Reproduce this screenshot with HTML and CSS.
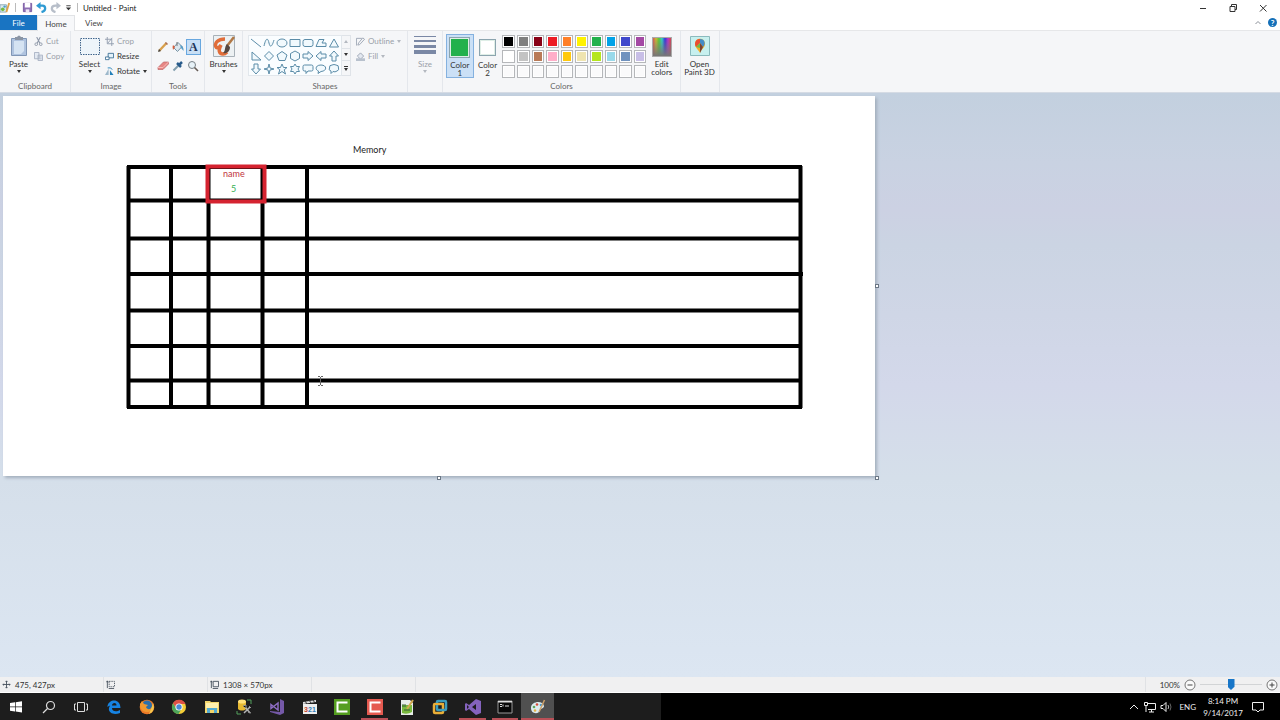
FILE: index.html
```
<!DOCTYPE html>
<html lang="en">
<head>
    <meta charset="UTF-8">
    <meta name="viewport" content="width=device-width, initial-scale=1.0">
    <title>Untitled - Paint</title>
    <link rel="stylesheet" href="styles.css">
</head>
<body>
    <header class="titlebar">
        <svg class="app-icon" viewBox="0 0 12 12"><path d="M0 3h7v8H0z" fill="#dcebf0" stroke="#8ca9b5"/><circle cx="3" cy="8" r="2" fill="#75b943"/><circle cx="5" cy="5" r="1.3" fill="#4ba0ca"/><path d="M10 1L7 11" stroke="#dfa34c" stroke-width="2"/></svg>
        <span class="title-sep"></span>
        <button class="quick" aria-label="Save"><svg viewBox="0 0 12 12"><path d="M1.5 1.5h9v9h-9z" fill="#8e6fb5" stroke="#75569f"/><path d="M3 1h6v5H3z" fill="#fff"/><path d="M4 8h4v3H4z" fill="#ede5f5"/></svg></button>
        <button class="quick" aria-label="Undo"><svg viewBox="0 0 12 12"><path d="M3 4h4q3 0 3 3t-4 4" fill="none" stroke="#2f9bd3" stroke-width="2.500"/><path d="M0 4l5-4v8z" fill="#2f9bd3"/></svg></button>
        <button class="quick" aria-label="Redo"><svg viewBox="0 0 12 12"><path d="M9 4H6Q2 4 2 7t4 4" fill="none" stroke="#b7bec9" stroke-width="2.500"/><path d="M12 4L7 0v8z" fill="#b7bec9"/></svg></button>
        <button class="quick more" aria-label="Customize toolbar"><svg viewBox="0 0 8 8"><path d="M1.5 2h5" stroke="#333"/><path d="M1 4h6L4 7z" fill="#333"/></svg></button>
        <span class="title-sep"></span>
        <h1>Untitled - Paint</h1>
        <div class="window-buttons">
            <button aria-label="Minimize"><svg viewBox="0 0 10 10"><path d="M2 5.500h6" stroke="#333"/></svg></button>
            <button aria-label="Restore"><svg viewBox="0 0 10 10"><path d="M2 3.500h5v5H2zM3.500 3.500v-2h5v5h-1.500" fill="none" stroke="#333"/></svg></button>
            <button aria-label="Close"><svg viewBox="0 0 10 10"><path d="M2 2l6.500 6.500M8.500 2L2 8.500" stroke="#333"/></svg></button>
        </div>
    </header>

    <nav class="tabs">
        <button class="tab file">File</button>
        <button class="tab active">Home</button>
        <button class="tab">View</button>
        <div class="tab-tools">
            <button aria-label="Minimize the Ribbon"><svg viewBox="0 0 10 10"><path d="M2.500 6L5 3.500 7.500 6" fill="none" stroke="#8b9098"/></svg></button>
            <button class="help" aria-label="Help">?</button>
        </div>
    </nav>

    <section class="ribbon">
        <div class="group clipboard">
            <div class="controls">
                <button class="big">
                    <svg viewBox="0 0 18 22"><path d="M1.500 3.500h15v17h-15z" fill="#afc3df" stroke="#8096b5"/><path d="M4 6h10v10l-3 3H4z" fill="#d5e3f2"/><path d="M5 2h2q2-3 4 0h2v3H5z" fill="#8b95a4"/></svg>
                    <span>Paste</span><i class="arrow"></i>
                </button>
                <div class="stack">
                    <button class="row off"><svg viewBox="0 0 10 10"><path d="M3 0l3.500 7M7 0L3.500 7" stroke="#8e98a9" stroke-width="1.200"/><circle cx="2.500" cy="8" r="1.500" fill="none" stroke="#8e98a9"/><circle cx="7.500" cy="8" r="1.500" fill="none" stroke="#8e98a9"/></svg>Cut</button>
                    <button class="row off"><svg viewBox="0 0 10 10"><path d="M.5.5h5v7h-5zM4.500 3.500h5v6h-5z" fill="#e3e9f2" stroke="#a6b0c2"/><path d="M5.500 5.500h3M5.500 7.500h3" stroke="#a6b0c2" stroke-width=".7"/></svg>Copy</button>
                </div>
            </div>
            <h2>Clipboard</h2>
        </div>

        <div class="group image">
            <div class="controls">
                <button class="big">
                    <svg viewBox="0 0 22 22"><path d="M1.500 3.500h19v16h-19z" fill="#edf4fa" stroke="#40658c" stroke-dasharray="1.500 1"/></svg>
                    <span>Select</span><i class="arrow"></i>
                </button>
                <div class="stack">
                    <button class="row off"><svg viewBox="0 0 10 10"><path d="M2.500 0v7.500H10M0 2.500h7.500V10M3 7l5-6" fill="none" stroke="#909bad"/></svg>Crop</button>
                    <button class="row"><svg viewBox="0 0 10 10"><path d="M3.500 1.500h6v5h-6z" fill="#e4f2fa" stroke="#3e7195"/><path d="M.5 5.500h4v3h-4z" fill="#fff" stroke="#3e7195"/></svg>Resize</button>
                    <button class="row"><svg viewBox="0 0 10 10"><path d="M4 2v7H0z" fill="#9cb8cb"/><path d="M5.500 3.500L9.500 9h-4z" fill="#2380b9"/><path d="M3 1q4-1 5 2" fill="none" stroke="#2380b9"/></svg>Rotate<i class="arrow"></i></button>
                </div>
            </div>
            <h2>Image</h2>
        </div>

        <div class="group tools">
            <div class="controls tool-grid">
                <button aria-label="Pencil"><svg viewBox="0 0 12 12"><path d="M2 10L9.500 2" stroke="#d8a04c" stroke-width="2.400"/><path d="M1 11l1-3 2 2z" fill="#444"/><path d="M8.500 1.500l2 2" stroke="#a96f55" stroke-width="1.500"/></svg></button>
                <button aria-label="Fill with color"><svg viewBox="0 0 12 12"><path d="M6 1.500l4 4-4.500 5-4-4z" fill="#dce7ee" stroke="#7793a6"/><path d="M5 1v4" stroke="#777"/><path d="M1 4Q0 6 1 9l2-3z" fill="#d65d39"/><path d="M8 4q4 1 3.500 6L9 7z" fill="#579ec8"/></svg></button>
                <button class="text-tool" aria-pressed="true" aria-label="Text">A</button>
                <button aria-label="Eraser"><svg viewBox="0 0 12 12"><path d="M1 7.500L6.500 2h5v2L6 9.500H1z" fill="#e78684" stroke="#bd686b" stroke-width=".7"/><path d="M1 7.500h5L11.500 2" fill="none" stroke="#f6bbb8"/></svg></button>
                <button aria-label="Color picker"><svg viewBox="0 0 12 12"><path d="M1.500 10.500L7 5" stroke="#819dad" stroke-width="2"/><path d="M5 3l4 4M7 5l3-3" stroke="#285b8b" stroke-width="2.500"/></svg></button>
                <button aria-label="Magnifier"><svg viewBox="0 0 12 12"><circle cx="5" cy="5" r="3.500" fill="#e7f2f8" stroke="#788087"/><path d="M7.500 7.500L11 11" stroke="#665c56" stroke-width="1.600"/></svg></button>
            </div>
            <h2>Tools</h2>
        </div>

        <div class="group brushes">
            <div class="controls">
                <button class="big">
                    <svg viewBox="0 0 22 22"><path d="M.5.5h21v21H.5z" fill="#edf1f3" stroke="#a8b1b8"/><path d="M12 4C5 4 1 8 3 12c1 2 4 0 5-2-3 5-2 9 2 9 2 0 3-1 4-2" fill="none" stroke="#e16d39" stroke-width="3.500"/><path d="M21 2l-7 9" stroke="#b17846" stroke-width="2.500"/><path d="M14 9l3 3c0 5-4 7-7 6 3-2 1-6 4-9z" fill="#554740"/></svg>
                    <span>Brushes</span><i class="arrow"></i>
                </button>
            </div>
        </div>

        <div class="group shapes">
            <div class="controls">
                <div class="gallery">
                    <button aria-label="Line"><svg viewBox="0 0 12 12"><path d="M1 2l10 8"/></svg></button>
                    <button aria-label="Curve"><svg viewBox="0 0 12 12"><path d="M1 9C3 0 5 1 6 6s3 4 5-3"/></svg></button>
                    <button aria-label="Oval"><svg viewBox="0 0 12 12"><ellipse cx="6" cy="6" rx="5" ry="4"/></svg></button>
                    <button aria-label="Rectangle"><svg viewBox="0 0 12 12"><path d="M1 2.500h10v7H1z"/></svg></button>
                    <button aria-label="Rounded rectangle"><svg viewBox="0 0 12 12"><rect x="1" y="2.500" width="10" height="7" rx="2"/></svg></button>
                    <button aria-label="Polygon"><svg viewBox="0 0 12 12"><path d="M1 9.500l3-7h5L7 6h4v3.500z"/></svg></button>
                    <button aria-label="Triangle"><svg viewBox="0 0 12 12"><path d="M6 2l4.500 8h-9z"/></svg></button>
                    <button aria-label="Right triangle"><svg viewBox="0 0 12 12"><path d="M2 2v8h9z"/></svg></button>
                    <button aria-label="Diamond"><svg viewBox="0 0 12 12"><path d="M6 1.500L10.500 6 6 10.500 1.500 6z"/></svg></button>
                    <button aria-label="Pentagon"><svg viewBox="0 0 12 12"><path d="M6 1.500l5 3.500-2 5.500H3L1 5z"/></svg></button>
                    <button aria-label="Hexagon"><svg viewBox="0 0 12 12"><path d="M6 1l4.500 2.500v5L6 11 1.500 8.500v-5z"/></svg></button>
                    <button aria-label="Right arrow"><svg viewBox="0 0 12 12"><path d="M1 4h5V1.500L11 6l-5 4.500V8H1z"/></svg></button>
                    <button aria-label="Left arrow"><svg viewBox="0 0 12 12"><path d="M11 4H6V1.500L1 6l5 4.500V8h5z"/></svg></button>
                    <button aria-label="Up arrow"><svg viewBox="0 0 12 12"><path d="M4 11V6H1.500L6 1l4.500 5H8v5z"/></svg></button>
                    <button aria-label="Down arrow"><svg viewBox="0 0 12 12"><path d="M4 1v5H1.500L6 11l4.500-5H8V1z"/></svg></button>
                    <button aria-label="Four-point star"><svg viewBox="0 0 12 12"><path d="M6 1l1 4 4 1-4 1-1 4-1-4-4-1 4-1z"/></svg></button>
                    <button aria-label="Five-point star"><svg viewBox="0 0 12 12"><path d="M6 1l1.500 3.500H11L8.200 6.800 9.500 11 6 8.500 2.500 11l1.300-4.200L1 4.500h3.500z"/></svg></button>
                    <button aria-label="Six-point star"><svg viewBox="0 0 12 12"><path d="M6 1l1.500 2.500h3L9 6l1.500 2.500h-3L6 11 4.500 8.500h-3L3 6 1.500 3.500h3z"/></svg></button>
                    <button aria-label="Rounded callout"><svg viewBox="0 0 12 12"><path d="M2.500 2h7Q11 2 11 3.500v3Q11 8 9.500 8H6l-2 2.500V8H2.500Q1 8 1 6.500v-3Q1 2 2.500 2z"/></svg></button>
                    <button aria-label="Oval callout"><svg viewBox="0 0 12 12"><path d="M3.500 8C0 7 0 2 6 2s6.500 6 0 6.500L3 10.500z"/></svg></button>
                    <button aria-label="Cloud callout"><svg viewBox="0 0 12 12"><path d="M3 8Q0 7 1.500 5 1 2 4 2q2-1 4 0 3 0 2.500 3 1 2-1.500 3-2 1.500-4 .500l-2 2z"/></svg></button>
                </div>
                <div class="gallery-scroll">
                    <button class="off" aria-label="Scroll up"><i class="arrow up"></i></button>
                    <button aria-label="Scroll down"><i class="arrow"></i></button>
                    <button class="all" aria-label="All shapes"><i class="arrow"></i></button>
                </div>
                <div class="stack">
                    <button class="row off"><svg viewBox="0 0 10 10"><path d="M.5 9.500v-8h6M2 9l2-.5 5.500-6-2-1.500L3 6.500z" fill="none" stroke="#9ba4b2"/></svg>Outline<i class="arrow"></i></button>
                    <button class="row off"><svg viewBox="0 0 10 10"><path d="M5 1l3.500 3.500L5 8 1.500 4.500z" fill="#e3e8f0" stroke="#9ba4b2"/><path d="M0 7h10v3H0z" fill="#b8c1cd"/></svg>Fill<i class="arrow"></i></button>
                </div>
            </div>
            <h2>Shapes</h2>
        </div>

        <div class="group size">
            <div class="controls">
                <button class="big off">
                    <svg viewBox="0 0 22 22"><path d="M0 1h22v1H0zM0 5h22v2H0zM0 10h22v3H0zM0 15h22v4H0z" fill="#7a88a5"/></svg>
                    <span>Size</span><i class="arrow"></i>
                </button>
            </div>
        </div>

        <div class="group colors">
            <div class="controls">
                <button class="big pick selected"><span class="current green"></span><span>Color<br>1</span></button>
                <button class="big pick"><span class="current second white"></span><span>Color<br>2</span></button>
                <div class="palette">
                    <button class="black" aria-label="Black"></button>
                    <button class="gray" aria-label="Gray"></button>
                    <button class="dark-red" aria-label="Dark red"></button>
                    <button class="red" aria-label="Red"></button>
                    <button class="orange" aria-label="Orange"></button>
                    <button class="yellow" aria-label="Yellow"></button>
                    <button class="green" aria-label="Green"></button>
                    <button class="turquoise" aria-label="Turquoise"></button>
                    <button class="indigo" aria-label="Indigo"></button>
                    <button class="purple" aria-label="Purple"></button>
                    <button class="white" aria-label="White"></button>
                    <button class="light-gray" aria-label="Light gray"></button>
                    <button class="brown" aria-label="Brown"></button>
                    <button class="rose" aria-label="Rose"></button>
                    <button class="gold" aria-label="Gold"></button>
                    <button class="light-yellow" aria-label="Light yellow"></button>
                    <button class="lime" aria-label="Lime"></button>
                    <button class="light-turquoise" aria-label="Light turquoise"></button>
                    <button class="blue-gray" aria-label="Blue gray"></button>
                    <button class="lavender" aria-label="Lavender"></button>
                    <button class="custom" aria-label="Custom 1"></button>
                    <button class="custom" aria-label="Custom 2"></button>
                    <button class="custom" aria-label="Custom 3"></button>
                    <button class="custom" aria-label="Custom 4"></button>
                    <button class="custom" aria-label="Custom 5"></button>
                    <button class="custom" aria-label="Custom 6"></button>
                    <button class="custom" aria-label="Custom 7"></button>
                    <button class="custom" aria-label="Custom 8"></button>
                    <button class="custom" aria-label="Custom 9"></button>
                    <button class="custom" aria-label="Custom 10"></button>
                </div>
                <button class="big"><span class="spectrum"></span><span>Edit<br>colors</span></button>
            </div>
            <h2>Colors</h2>
        </div>

        <div class="group paint3d">
            <div class="controls">
                <button class="big">
                    <svg viewBox="0 0 22 22"><path d="M1.500 1.500h19v19h-19z" fill="#c7f0ef" stroke="#8bbabd"/><path d="M11 18c-1-3-5-5-5-9 0-7 10-7 10 0 0 4-4 5-5 9z" fill="#f6ad22"/><path d="M11 4c-5 0-6 5-4 8l4-4z" fill="#e94e35"/><path d="M11 4c5 0 6 5 3 8l-3-4z" fill="#438cca"/><path d="M11 8l3 4-3 6z" fill="#7a4435"/><path d="M7 12l4-4v5z" fill="#6fba48"/></svg>
                    <span>Open<br>Paint 3D</span>
                </button>
            </div>
        </div>
    </section>

    <main class="workspace">
        <div class="sheet">
            <svg class="drawing" viewBox="-1 0 872 380">
                <!-- memory grid -->
                <path class="ink" d="M123 71h675M123 104.500h675M123 142.500h675M123 178h676M123 214.500h675M123 250h675M123 284.500h675M123 311h675"/>
                <path class="ink" d="M124.500 70v242M167 70v242M204.500 70v242M258.500 70v242M303 69v243M796.500 70v242"/>
                <path class="marker" d="M203.500 70.500h57v35h-57z"/>
                <text class="caption" x="349" y="57">Memory</text>
                <text class="caption marker-text" x="219" y="81">name</text>
                <text class="caption value-text" x="227" y="96">5</text>
                <path class="ibeam" d="M314 280.500h2M317 280.500h2M314 289.500h2M317 289.500h2M316.500 281v8"/>
            </svg>
            <span class="handle right"></span>
            <span class="handle bottom"></span>
            <span class="handle corner"></span>
        </div>
    </main>

    <footer class="statusbar">
        <div class="status"><svg viewBox="0 0 10 10"><path d="M5 1v8M1 5h8M4 2l1-1 1 1M4 8l1 1 1-1M2 4L1 5l1 1M8 4l1 1-1 1" fill="none" stroke="#46505c"/></svg>475, 427px</div>
        <div class="status"><svg viewBox="0 0 10 10"><path d="M1.500 1v8M.5 2.500L1.500 1l1 1.500M3 9.500h6" fill="none" stroke="#46505c"/><path d="M3.500 1.500h6v6h-6z" fill="none" stroke="#46505c" stroke-dasharray="1.500 1"/></svg></div>
        <div class="status"><svg viewBox="0 0 10 10"><path d="M1.500 1v8M.5 2.500L1.500 1l1 1.500M3 9.500h6M3.500 1.500h6v6h-6z" fill="none" stroke="#46505c"/></svg>1308 × 570px</div>
        <div class="status"></div>
        <div class="zoom">
            <label for="zoom">100%</label>
            <button aria-label="Zoom out"><svg viewBox="0 0 12 12"><circle cx="6" cy="6" r="5" fill="#fafafa" stroke="#777"/><path d="M3.500 6h5" stroke="#444"/></svg></button>
            <input type="range" id="zoom" min="0" max="100" value="50">
            <button aria-label="Zoom in"><svg viewBox="0 0 12 12"><circle cx="6" cy="6" r="5" fill="#fafafa" stroke="#777"/><path d="M3.500 6h5M6 3.500v5" stroke="#444"/></svg></button>
        </div>
    </footer>

    <div class="taskbar">
        <div class="apps">
            <button aria-label="Start"><svg viewBox="0 0 16 16"><path d="M2 4l5-.7v4.200H2zM7.700 3.200L14 2.300v5.200H7.700zM2 8.300h5v4.200l-5-.7zM7.700 8.300H14v5.200l-6.300-.9z" fill="#fff"/></svg></button>
            <button aria-label="Search"><svg viewBox="0 0 16 16"><circle cx="9.500" cy="6.500" r="4" fill="none" stroke="#ddd" stroke-width="1.200"/><path d="M6.500 9.500L2 14" stroke="#ddd" stroke-width="1.300"/></svg></button>
            <button aria-label="Task view"><svg viewBox="0 0 16 16"><path d="M4.500 3.500h7v9h-7zM3 5H1.500v6H3M13 5h1.500v6H13" fill="none" stroke="#ddd"/></svg></button>
            <button aria-label="Edge"><svg viewBox="0 0 16 16"><path d="M1.500 7C3 0 14-1 14.500 9H6c0 4 5 4 8 2v3C7 17 0 13 4 6.500 2.500 7 2 7.500 1.500 8zM6 6.500h4.500C10.500 3 6 3.500 6 6.500z" fill="#1683e2" fill-rule="evenodd"/></svg></button>
            <button aria-label="Firefox"><svg viewBox="0 0 16 16"><circle cx="8" cy="8" r="7.300" fill="#ed7927"/><circle cx="8" cy="6.500" r="5" fill="#2c70ac"/><path d="M1 5l2-3 2 3 4 1-2 2c1 3 5 3 7-1 0 6-7 8-11 4C1 9 1 7 1 5z" fill="#f29930"/><path d="M14 4q3 8-4 11 2-4 4-11z" fill="#f5c74e"/></svg></button>
            <button aria-label="Chrome"><svg viewBox="0 0 16 16"><circle cx="8" cy="8" r="7" fill="#f4cd37"/><path d="M2 4.200A7 7 0 0 1 14.500 5H8a3.200 3.200 0 0 0-3 4.200z" fill="#dd5147"/><path d="M2 4.200A7 7 0 0 0 7.500 15L10.600 9.800A3.500 3.500 0 0 1 5 9.200z" fill="#4da65a"/><circle cx="8" cy="8" r="3.600" fill="#fff"/><circle cx="8" cy="8" r="2.700" fill="#4989d7"/></svg></button>
            <button aria-label="File Explorer"><svg viewBox="0 0 16 16"><path d="M1 2h5l1 1h8v11H1z" fill="#f2d56c"/><path d="M2 4h12v5H2z" fill="#fff0ae"/><path d="M3 9h10v5h-3v-3H6v3H3z" fill="#54abd2"/></svg></button>
            <button aria-label="SQL Server"><svg viewBox="0 0 16 16"><path d="M1 12v3h4M11 1h4v4" fill="none" stroke="#55a25f"/><path d="M2 2v8c2 2 6 2 8 0V2z" fill="#e6b831"/><ellipse cx="6" cy="2.500" rx="4" ry="2" fill="#ffe079"/><path d="M8 14l6-6M9 8l5 6" stroke="#b4b5b5" stroke-width="1.500"/><path d="M7 7l3-1v3M13 7l2 2M12 13l3 1" stroke="#999"/></svg></button>
            <button aria-label="Visual Studio Tools"><svg viewBox="0 0 16 16"><path d="M11 0l4 2v12l-4 2-10-3v-1l10 1z" fill="#7559a8"/><path d="M2 5.500L9 11V4L2 9.500z" fill="none" stroke="#8d6cc3" stroke-width="1.500"/></svg></button>
            <button aria-label="Media Player Classic"><svg viewBox="0 0 16 16"><path d="M1 5h14v10H1z" fill="#eee"/><path d="M1 3l13-2v2L1 5z" fill="#ddd"/><path d="M3 2l2 3M7 1l2 3M11 1l2 3" stroke="#333"/><text x="2" y="13" class="tiny-red">3</text><text x="6" y="13" class="tiny-blue">2</text><text x="10" y="13" class="tiny-blue">1</text></svg></button>
            <button aria-label="Camtasia"><svg viewBox="0 0 16 16"><path d="M0 0h16v16H0z" fill="#559e20"/><path d="M12.500 4.500V3.500h-9v9h9v-1" fill="none" stroke="#fff" stroke-width="2"/></svg></button>
            <button class="open" aria-label="Camtasia Recorder"><svg viewBox="0 0 16 16"><path d="M0 0h16v16H0z" fill="#e55a50"/><path d="M12.500 4.500V3.500h-9v9h9v-1" fill="none" stroke="#fff" stroke-width="2"/></svg></button>
            <button aria-label="Notepad++"><svg viewBox="0 0 16 16"><path d="M2 1h9l3 3v12H2z" fill="#e7ece8"/><path d="M3 6h10v7q-5 3-10 1z" fill="#79b93e"/><path d="M14 1L8 10" stroke="#d3aa4f" stroke-width="2"/><path d="M4 5v3M6 5v3M5 11h6" stroke="#365e37"/></svg></button>
            <button aria-label="VMware"><svg viewBox="0 0 16 16"><rect x="2" y="5" width="9" height="9" rx="1" fill="none" stroke="#e9ae38" stroke-width="2.500"/><rect x="5" y="2" width="9" height="9" rx="1" fill="none" stroke="#3b9cbd" stroke-width="2.500"/><path d="M3 5h8v3" fill="none" stroke="#e9ae38" stroke-width="2"/></svg></button>
            <button class="open" aria-label="Visual Studio"><svg viewBox="0 0 16 16"><path d="M11 0l5 2v12l-5 2-7-6-3 2-1-1V5l1-1 3 2zM11 5L7 8l4 3zM2 6v4l2-2z" fill="#8463bd" fill-rule="evenodd"/></svg></button>
            <button class="open" aria-label="Command Prompt"><svg viewBox="0 0 16 16"><path d="M1 2h14v12H1z" fill="#070707" stroke="#999"/><path d="M1 2h14v1.500H1z" fill="#ddd"/><path d="M3 5.500h2M3 7.500h2M6 5.500v2M8 7h4" stroke="#ddd"/></svg></button>
            <button class="open current-app" aria-label="Paint"><svg viewBox="0 0 16 16"><path d="M1 9C1 2 13 1 14 7c0 3-4 2-4 4 0 4-9 5-9-2z" fill="#dcebf0"/><circle cx="4" cy="8" r="1.300" fill="#62a65d"/><circle cx="7" cy="5.500" r="1.300" fill="#d64c39"/><circle cx="11" cy="6" r="1.300" fill="#4c9bcf"/><circle cx="5" cy="11.500" r="1.300" fill="#e5b344"/><path d="M14.500 1L9 13" stroke="#cda169" stroke-width="1.500"/></svg></button>
        </div>
        <div class="tray">
            <button aria-label="Show hidden icons"><svg viewBox="0 0 12 12"><path d="M2 8l4-4 4 4" fill="none" stroke="#eee"/></svg></button>
            <button aria-label="Network"><svg viewBox="0 0 12 12"><path d="M4 2.500h7.500v6H4M7.500 9v2M5 11h5M.5 1.500h3v3h-3zM2 5v6" fill="none" stroke="#eee"/></svg></button>
            <button aria-label="Volume"><svg viewBox="0 0 12 12"><path d="M1 4.500h2l3-3v9l-3-3H1z" fill="none" stroke="#eee"/><path d="M8 4q1.500 2 0 4" fill="none" stroke="#bbb"/><path d="M10 2.500q2 3.500 0 7" fill="none" stroke="#666"/></svg></button>
            <button class="lang">ENG</button>
            <button class="clock">8:14 PM<br>9/14/2017</button>
            <button class="action" aria-label="Action center"><svg viewBox="0 0 12 12"><path d="M.5 1.500h11v7.500H8L6 11 4 9H.5z" fill="none" stroke="#eee"/></svg></button>
        </div>
    </div>
</body>
</html>
```
FILE: styles.css
```
* {
    box-sizing: border-box;
}
body {
    margin: 0;
    min-height: 100vh;
    display: flex;
    flex-direction: column;
    font-family: Lato, "Open Sans", sans-serif;
    font-size: 8px;
    line-height: 8px;
    color: #333;
    background: #fff;
}
button {
    margin: 0;
    padding: 0;
    border: 0;
    background: none;
    font: inherit;
    color: inherit;
}
h1, h2 {
    margin: 0;
    font: inherit;
}
svg {
    display: block;
    flex: none;
}

/* title bar */
.titlebar {
    display: flex;
    align-items: center;
    height: 15px;
}
.app-icon {
    width: 11px;
    height: 11px;
}
.title-sep {
    width: 1px;
    height: 9px;
    margin: 0 5px 0 4px;
    background: #bbb;
}
.quick {
    width: 12px;
    margin-right: 2px;
}
.quick svg {
    width: 11px;
    height: 11px;
    margin: auto;
}
.quick.more {
    width: 10px;
    margin: 0;
}
.quick.more svg {
    width: 7px;
}
.titlebar h1 {
    color: #222;
}
.window-buttons {
    display: flex;
    margin-left: auto;
    padding-right: 2px;
}
.window-buttons button {
    width: 30px;
}
.window-buttons svg {
    width: 10px;
    height: 10px;
    margin: auto;
}

/* tabs */
.tabs {
    display: flex;
    height: 16px;
    border-bottom: 1px solid #e6e7e9;
}
.tab {
    width: 38px;
    color: #444;
}
.tab.file {
    width: 37px;
    color: #fff;
    background: #1974c2;
}
.tab.active {
    height: 16px;
    border: 1px solid #e1e3e6;
    border-bottom: 0;
    background: #f7f8fa;
}
.tab-tools {
    display: flex;
    align-items: center;
    gap: 5px;
    margin-left: auto;
    padding-right: 3px;
}
.tab-tools svg {
    width: 10px;
    height: 10px;
}
.help {
    width: 9px;
    height: 9px;
    border-radius: 50%;
    background: #1570b8;
    color: #fff;
    font-weight: bold;
}

/* ribbon */
.ribbon {
    display: flex;
    height: 62px;
    background: #f5f6f8;
    border-bottom: 1px solid #d5dbe4;
}
.group {
    display: flex;
    flex-direction: column;
    justify-content: space-between;
    padding: 3px 3px 2px;
    border-right: 1px solid #e4e7ec;
}
.group h2 {
    text-align: center;
    color: #666;
}
.controls {
    display: flex;
    height: 44px;
}
.clipboard {
    width: 71px;
}
.image {
    width: 81px;
}
.tools {
    width: 53px;
}
.brushes {
    width: 38px;
}
.shapes {
    width: 165px;
}
.size {
    width: 35px;
}
.colors {
    width: 238px;
}
.paint3d {
    width: 39px;
}
.big {
    display: flex;
    flex-direction: column;
    align-items: center;
    width: 31px;
    padding-top: 1px;
    white-space: nowrap;
}
.big svg {
    width: 22px;
    height: 22px;
    margin-bottom: 3px;
}
.big .arrow {
    margin-top: 2px;
}
.arrow {
    width: 0;
    height: 0;
    border: 2px solid transparent;
    border-top: 3px solid #333;
    border-bottom: 0;
}
.arrow.up {
    border-top: 0;
    border-bottom: 3px solid #333;
}
.off {
    color: #9a9fa8;
}
.off .arrow {
    border-top-color: #b3b8c0;
}
.off .arrow.up {
    border-bottom-color: #b3b8c0;
}
.stack {
    display: flex;
    flex-direction: column;
    gap: 5px;
    padding-top: 2px;
}
.row {
    display: flex;
    align-items: center;
    gap: 3px;
    height: 10px;
}
.row svg {
    width: 9px;
    height: 9px;
}
.tool-grid {
    display: grid;
    grid-template-columns: repeat(3, 1fr);
    align-content: start;
    gap: 3px 0;
    padding-top: 5px;
}
.tool-grid button {
    height: 16px;
}
.tool-grid svg {
    width: 12px;
    height: 12px;
    margin: auto;
}
.tool-grid .text-tool {
    border: 1px solid #68a7df;
    background: #c8dff5;
    font: bold 12px/14px "Liberation Serif", serif;
    color: #1f3558;
}
.shapes .controls {
    padding: 1px 0 2px 2px;
}
.gallery {
    display: grid;
    grid-template-columns: repeat(7, 1fr);
    width: 94px;
    border: 1px solid #e2e7ec;
    background: #fafdff;
}
.gallery svg {
    width: 12px;
    height: 12px;
    margin: auto;
    fill: #f1f9fd;
    stroke: #5b8ca8;
}
.gallery-scroll {
    display: grid;
    width: 9px;
    margin-right: 5px;
    border: 1px solid #dfe3e8;
    border-left: 0;
}
.gallery-scroll button {
    display: flex;
    flex-direction: column;
    align-items: center;
    justify-content: center;
    gap: 1px;
}
.gallery-scroll button + button {
    border-top: 1px solid #dfe3e8;
}
.gallery-scroll .all::before {
    content: "";
    width: 4px;
    height: 1px;
    background: #333;
}
.shapes .stack {
    padding-top: 1px;
}

/* colors */
.pick {
    width: 28px;
    height: 44px;
    border: 1px solid transparent;
}
.pick.selected {
    border-color: #84b1df;
    background: #cbe0f6;
}
.current {
    width: 21px;
    height: 21px;
    margin: 1px 0 3px;
    border: 1px solid #8ba4ae;
    box-shadow: inset 0 0 0 1px #dfeee7;
}
.current.second {
    width: 17px;
    height: 17px;
    margin: 3px 0 5px;
}
.palette {
    display: grid;
    grid-template-columns: repeat(10, 1fr);
    grid-auto-rows: 13px;
    gap: 2px;
    width: 146px;
    margin: 1px 0 0 1px;
}
.palette button {
    border: 1px solid #b5b7ba;
    box-shadow: inset 0 0 0 1px #fff;
}
.spectrum {
    width: 20px;
    height: 20px;
    margin: 2px 0 3px;
    border: 1px solid #aaa;
    background:
        linear-gradient(transparent, #777),
        linear-gradient(90deg, #d55, #cb3, #5c3, #3cc, #33d, #b3c, #d44);
}
.black { background: #000; }
.gray { background: #7f7f7f; }
.dark-red { background: #880015; }
.red { background: #ed1c24; }
.orange { background: #ff7f27; }
.yellow { background: #fff200; }
.green { background: #22b14c; }
.turquoise { background: #00a2e8; }
.indigo { background: #3f48cc; }
.purple { background: #a349a4; }
.white { background: #fff; }
.light-gray { background: #c3c3c3; }
.brown { background: #b97a57; }
.rose { background: #ffaec9; }
.gold { background: #ffc90e; }
.light-yellow { background: #efe4b0; }
.lime { background: #b5e61d; }
.light-turquoise { background: #99d9ea; }
.blue-gray { background: #7092be; }
.lavender { background: #c8bfe7; }
.custom { background: #fafafb; }

/* canvas */
.workspace {
    flex: 1;
    padding: 3px;
    background: linear-gradient(#c3d0df, #c9d2e2 12%, #ccd1e3 20%, #cbd4e3 26%, #cfd6e6 38%, #d3d8ea 50%, #d5dfea 66%, #dce6f2);
}
.sheet {
    position: relative;
    width: fit-content;
    background: #fff;
    box-shadow: 2px 2px 3px #a3afbd;
}
.drawing {
    width: 872px;
}
.ink {
    fill: none;
    stroke: #000;
    stroke-width: 4px;
}
.marker {
    fill: none;
    stroke: #d52330;
    stroke-width: 4px;
}
.caption {
    font: 9px Lato, sans-serif;
    fill: #222;
}
.marker-text {
    fill: #c0333c;
}
.value-text {
    fill: #35b052;
}
.ibeam {
    stroke: #666;
    fill: none;
}
.handle {
    position: absolute;
    width: 4px;
    height: 4px;
    border: 1px solid #6b7785;
    background: #fff;
}
.handle.right {
    top: 50%;
    left: 100%;
    transform: translateY(-50%);
}
.handle.bottom {
    top: 100%;
    left: 50%;
    transform: translateX(-50%);
}
.handle.corner {
    top: 100%;
    left: 100%;
}

/* status bar */
.statusbar {
    display: flex;
    height: 16px;
    background: #f0f0f1;
    border-bottom: 1px solid #fff;
}
.status {
    display: flex;
    align-items: center;
    gap: 4px;
    width: 104px;
    padding-left: 2px;
    border-right: 1px solid #e0e2e5;
}
.status svg {
    width: 9px;
    height: 9px;
}
.zoom {
    display: flex;
    align-items: center;
    gap: 4px;
    margin-left: auto;
    padding: 0 2px 0 14px;
    border-left: 1px solid #e0e2e5;
}
.zoom svg {
    width: 12px;
    height: 12px;
}
.zoom input {
    width: 62px;
    height: 12px;
    margin: 0;
    appearance: none;
    background: linear-gradient(#d2d4d6, #d2d4d6) center / 100% 1px no-repeat;
}
.zoom input::-webkit-slider-thumb {
    appearance: none;
    width: 7px;
    height: 11px;
    background: #1876c8;
    clip-path: polygon(0 0, 100% 0, 100% 70%, 50% 100%, 0 70%);
}

/* taskbar */
.taskbar {
    display: flex;
    justify-content: space-between;
    height: 27px;
    background: #000;
    color: #eee;
}
.apps {
    display: grid;
    grid-template-columns: repeat(17, 1fr);
    width: 661px;
    padding-right: 107px;
    background: #1d1d1d;
}
.apps svg {
    width: 16px;
    height: 16px;
    margin: auto;
}
.open {
    margin: 0 3px;
    border-bottom: 2px solid #b95057;
    padding-top: 2px;
}
.current-app {
    margin: 0;
    background: #505050;
}
.tiny-red, .tiny-blue {
    font: bold 7px "Liberation Sans", sans-serif;
    fill: #c4472d;
}
.tiny-blue {
    fill: #347db8;
}
.tray {
    display: flex;
    align-items: center;
    gap: 4px;
    padding-right: 16px;
}
.tray svg {
    width: 12px;
    height: 12px;
}
.lang {
    margin: 0 3px;
}
.clock {
    width: 40px;
    line-height: 12px;
}
.action {
    margin-left: 5px;
}
```
